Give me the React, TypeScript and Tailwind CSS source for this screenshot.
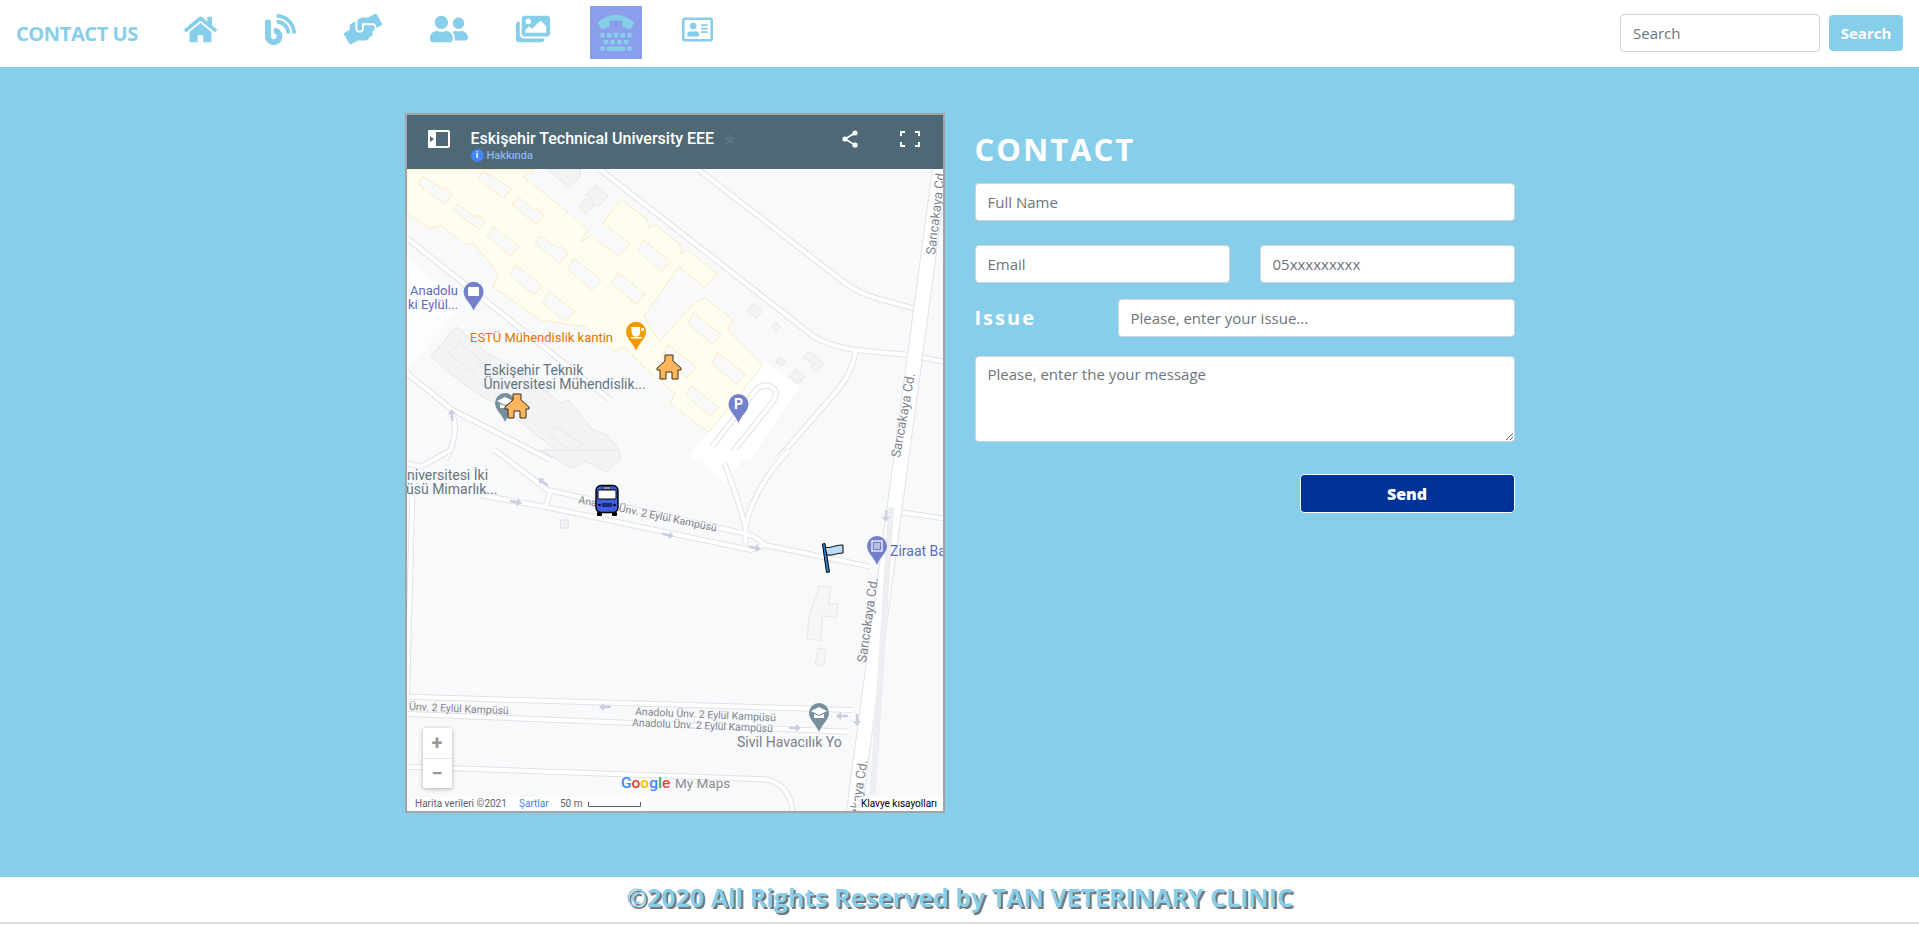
import { FaBlog, FaHandsHelping, FaHome, FaImages, FaRegAddressCard, FaTty, FaUserFriends } from "react-icons/fa";

const sans = "font-['Open_Sans','Noto_Sans',sans-serif]";
const fieldClass =
  "h-[38px] rounded border border-[#ced4da] bg-white px-[12px] text-[15px] text-[#495057] outline-none placeholder:text-[#6c757d]";

// polygons below are traced from the crops, so they sit in crop coordinates
const upper = "matrix(0.3507 0 0 0.3333 400 110)";
const lower = "matrix(0.3507 0 0 0.3333 400 450)";

const campus =
  "20,178 385,178 350,200 465,295 535,360 515,395 545,378 625,440 655,400 578,340 630,268 705,330 710,355 730,345 805,410 800,430 820,420 903,490 870,532 795,470 695,620 740,695 838,580 870,565 950,630 935,660 1035,765 880,968 770,880 785,850 690,765 640,710 610,725 530,650 400,630 265,530 280,490 210,400 190,405 115,345 85,355 20,310";

const courts = [
  "65,198 122,238 128,230 150,255 125,282 52,222",
  "235,183 318,235 295,265 222,208",
  "335,260 385,300 390,295 412,315 388,342 320,285",
  "165,283 218,325 222,315 245,335 225,358 150,300",
  "265,350 340,410 315,437 247,378",
  "400,378 450,415 458,408 480,430 455,460 385,400",
  "495,445 575,510 548,540 478,478",
  "620,488 700,552 672,582 603,520",
  "330,465 407,528 382,555 312,495",
  "425,545 500,605 472,635 405,578",
  "695,390 772,455 745,485 677,422",
  "838,610 917,675 890,703 820,640",
  "905,727 985,792 960,822 888,760",
  "830,828 910,892 885,918 813,855",
  "765,705 845,770 818,803 745,745",
];

const greys = [
  "560,225 595,260 565,290 530,255",
  "530,265 555,285 530,312 510,290",
  "420,178 515,178 510,205 480,230",
  "1010,582 1032,605 1015,624 990,602",
  "1072,636 1084,650 1072,664 1060,650",
  "1085,742 1100,755 1088,768 1072,755",
  "1130,778 1155,800 1135,822 1110,800",
  "1165,724 1208,760 1188,786 1172,772 1178,762 1150,742",
  "88,740 160,650 250,730 340,780 460,880 480,870 550,960 590,975 625,1020 600,1050 480,1050 300,900 190,830",
];

const upperRoads = [
  "M570 178 L1180 680 Q1230 710 1300 720 L1450 735 L1550 755",
  "M850 178 L1270 520 Q1310 550 1360 565 L1465 595",
  "M20 385 L600 870",
  "M20 790 L150 900 L430 1050",
  "M1300 720 Q1290 790 1240 850 L1075 1050",
  "M890 1010 L1015 840 Q1040 815 1065 835 Q1080 850 1060 880 L930 1050",
  "M150 915 Q170 970 130 1050",
];

const lowerRoads = [
  "M270 0 L420 120 L980 250 Q1020 260 1040 285 L1340 350",
  "M230 135 L410 170 L1000 300 L1040 285",
  "M430 120 L415 170",
  "M1110 0 Q1010 110 985 230 L985 280",
  "M925 40 Q960 130 985 230",
  "M35 140 L20 740",
  "M20 740 L1290 780",
  "M20 792 L1280 845",
  "M20 950 L1040 988 Q1110 1000 1120 1085",
  "M20 40 L60 50 L145 0",
  "M1420 185 L1550 205",
];

const arrows: [number, number, number][] = [
  [516, 502, 12],
  [668, 535, 12],
  [755, 548, 12],
  [543, 482, 218],
  [605, 707, 180],
  [842, 716, 180],
  [795, 728, 0],
  [857, 720, 90],
  [886, 516, 95],
  [452, 415, 265],
];

const pins: [number, number, string][] = [
  [473.6, 291.7, "#7580cc"],
  [636, 331.7, "#f29900"],
  [738.5, 404, "#7580cc"],
  [505, 403, "#78909c"],
  [877, 546, "#7580cc"],
  [819, 713, "#78909c"],
];

function Pin({ x, y, fill }: { x: number; y: number; fill: string }) {
  return (
    <g transform={`translate(${x} ${y})`}>
      <path d="M-10 0 A10 10 0 1 1 10 0 C10 7 3 11 0 19 C-3 11 -10 7 -10 0 Z" fill={fill} />
    </g>
  );
}

function House({ x, y }: { x: number; y: number }) {
  return (
    <g transform={`translate(${x} ${y})`}>
      <path
        d="M-4 0 H4 V6 L12 13 V15 H9 V24 H3 V17 H-3 V24 H-9 V15 H-12 V13 L-4 6 Z"
        fill="#ffb55f"
        stroke="#3b2c14"
        strokeWidth="1"
      />
    </g>
  );
}

function RoadLabel({ x, y, rotate, size = 10.5, children }: {
  x: number;
  y: number;
  rotate: number;
  size?: number;
  children: string;
}) {
  return (
    <text x={x} y={y} transform={`rotate(${rotate} ${x} ${y})`} fontSize={size} fill="#7d838b">
      {children}
    </text>
  );
}

function MapCanvas() {
  return (
    <svg viewBox="407 169 536 642" className="block h-[642px] w-[536px] font-['Roboto',sans-serif]">
      <rect x="407" y="169" width="536" height="642" fill="#f8f9fb" />
      <g transform={upper}>
        <polygon points="830,1030 1040,755 1140,830 1000,1050 830,1050" fill="#ffffff" />
        <polygon points="20,440 170,600 20,775" fill="#fdfdfe" />
        {greys.map((points) => (
          <polygon key={points} points={points} fill="#f1f3f4" stroke="#e4e6e9" strokeWidth="1" vectorEffect="non-scaling-stroke" />
        ))}
        <polygon points="140,730 170,698 235,755 205,787" fill="#f1f3f4" stroke="#e4e6e9" strokeWidth="1" vectorEffect="non-scaling-stroke" />
        <polygon points="425,975 445,950 518,1000 495,1028" fill="#f1f3f4" stroke="#e4e6e9" strokeWidth="1" vectorEffect="non-scaling-stroke" />
        <polygon points={campus} fill="#fffcf0" stroke="#fdeabf" strokeWidth="1" vectorEffect="non-scaling-stroke" />
        {courts.map((points) => (
          <polygon key={points} points={points} fill="#f8f9fa" stroke="#fdeabf" strokeWidth="1" vectorEffect="non-scaling-stroke" />
        ))}
        {upperRoads.map((d) => (
          <path key={d} d={d} fill="none" stroke="#dfe2e7" strokeWidth="6" vectorEffect="non-scaling-stroke" />
        ))}
        {upperRoads.map((d) => (
          <path key={d} d={d} fill="none" stroke="#ffffff" strokeWidth="4" vectorEffect="non-scaling-stroke" />
        ))}
      </g>
      <g transform={lower}>
        <polygon points="830,0 1000,0 925,100" fill="#ffffff" />
        <polygon points="400,0 625,0 630,25 590,65 530,35 490,55" fill="#f1f3f4" stroke="#e4e6e9" strokeWidth="1" vectorEffect="non-scaling-stroke" />
        <polygon points="1195,408 1230,412 1222,462 1248,460 1245,502 1205,498 1200,572 1160,565 1168,490" fill="#f5f6f7" stroke="#e4e6e9" strokeWidth="1" vectorEffect="non-scaling-stroke" />
        <polygon points="1192,595 1215,598 1208,648 1184,644" fill="#f5f6f7" stroke="#e4e6e9" strokeWidth="1" vectorEffect="non-scaling-stroke" />
        <rect x="458" y="210" width="22" height="24" fill="#f1f3f4" stroke="#e0e2e5" strokeWidth="1" vectorEffect="non-scaling-stroke" />
        {lowerRoads.map((d) => (
          <path key={d} d={d} fill="none" stroke="#dfe2e7" strokeWidth="6" vectorEffect="non-scaling-stroke" />
        ))}
        {lowerRoads.map((d) => (
          <path key={d} d={d} fill="none" stroke="#ffffff" strokeWidth="4" vectorEffect="non-scaling-stroke" />
        ))}
      </g>
      <path d="M940 169 L854 811" fill="none" stroke="#dfe2e7" strokeWidth="16" />
      <path d="M940 169 L854 811" fill="none" stroke="#ffffff" strokeWidth="14" />
      <path d="M891 510 L873 792" fill="none" stroke="#eceef1" strokeWidth="6" strokeLinecap="round" />

      {arrows.map(([x, y, rotate]) => (
        <path
          key={`${x}-${y}`}
          transform={`translate(${x} ${y}) rotate(${rotate})`}
          d="M-6 -1.2 H1 V-4 L6 0 L1 4 V1.2 H-6 Z"
          fill="#c9cee0"
        />
      ))}

      {pins.map(([x, y, fill]) => (
        <Pin key={`${x}-${y}`} x={x} y={y} fill={fill} />
      ))}
      <rect x="468" y="287" width="11" height="9" rx="1" fill="#ffffff" />
      <path d="M631 327 H640 V331 A4 4 0 0 1 632 334 Z M641 328 H644 V331 H641 Z M631 337 H642 V338.5 H631 Z" fill="#ffffff" />
      <text x="738.5" y="409" fontSize="14" fontWeight="700" fill="#ffffff" textAnchor="middle">P</text>
      <path d="M497 401 L505 397 L513 401 L505 405 Z M500 404 V408 H510 V404 L505 406 Z" fill="#ffffff" />
      <rect x="872" y="541" width="10" height="10" fill="none" stroke="#ffffff" strokeWidth="1.2" />
      <path d="M874 544 H880 M874 546 H880 M874 548 H880" stroke="#ffffff" strokeWidth="1" />
      <path d="M811 711 L819 707 L827 711 L819 715 Z M814 714 V718 H824 V714 L819 716 Z" fill="#ffffff" />

      <House x={669} y={355} />
      <House x={517} y={394} />

      <g fontSize="13">
        <text x="410" y="295" fill="#5c6bc0">Anadolu</text>
        <text x="408" y="309" fill="#5c6bc0">ki Eylül...</text>
        <text x="470" y="342" fill="#e37400">ESTÜ Mühendislik kantin</text>
      </g>
      <g fontSize="14">
        <text x="483.5" y="375" fill="#667580">Eskişehir Teknik</text>
        <text x="483.5" y="389" fill="#667580">Üniversitesi Mühendislik...</text>
        <text x="407" y="480" fill="#667580">niversitesi İki</text>
        <text x="406" y="494" fill="#667580">üsü Mimarlık...</text>
        <text x="890" y="556" fill="#5c6bc0">Ziraat Ba</text>
        <text x="737" y="747" fill="#7b8086">Sivil Havacılık Yo</text>
      </g>

      <RoadLabel x={578} y={503} rotate={11.7}>Anadolu Ünv. 2 Eylül Kampüsü</RoadLabel>
      <RoadLabel x={409} y={710} rotate={2.5}>Ünv. 2 Eylül Kampüsü</RoadLabel>
      <RoadLabel x={635} y={715} rotate={2.5}>Anadolu Ünv. 2 Eylül Kampüsü</RoadLabel>
      <RoadLabel x={632} y={726} rotate={2.5}>Anadolu Ünv. 2 Eylül Kampüsü</RoadLabel>
      <RoadLabel x={935} y={255} rotate={-83} size={13}>Sarıcakaya Cd.</RoadLabel>
      <RoadLabel x={900} y={458} rotate={-80} size={13}>Sarıcakaya Cd.</RoadLabel>
      <RoadLabel x={866} y={663} rotate={-82} size={13}>Sarıcakaya Cd.</RoadLabel>
      <RoadLabel x={854} y={845} rotate={-81} size={13}>Sarıcakaya Cd.</RoadLabel>

      {/* bus */}
      <g transform="translate(595 485)">
        <rect x="1" y="0.5" width="22" height="27" rx="5" fill="#3f5fe0" stroke="#000000" strokeWidth="1.4" />
        <rect x="3" y="5" width="18" height="9" rx="1" fill="#ffffff" stroke="#000000" strokeWidth="1" />
        <rect x="8" y="2" width="8" height="2" fill="#c9d2f5" stroke="#000000" strokeWidth="0.6" />
        <rect x="7" y="18" width="10" height="4" fill="#1c2a7a" />
        <circle cx="4.5" cy="20" r="1.3" fill="#000000" />
        <circle cx="19.5" cy="20" r="1.3" fill="#000000" />
        <rect x="2" y="27" width="5" height="4" rx="1" fill="#000000" />
        <rect x="17" y="27" width="5" height="4" rx="1" fill="#000000" />
      </g>
      {/* flag */}
      <g transform="translate(822 543)">
        <path d="M0.5 1 L3 0.5 L7.5 29 L4.5 29.5 Z" fill="#2f86d8" stroke="#000000" strokeWidth="1" />
        <path d="M3 4 C8 6 12 2 21 2 L21 10 C14 10 11 13 5 12 Z" fill="#bcdcf5" stroke="#000000" strokeWidth="1" />
      </g>

      {/* attribution */}
      <rect x="410" y="797" width="237" height="13" fill="#ffffff" opacity="0.8" />
      <rect x="856" y="797" width="87" height="14" fill="#ffffff" opacity="0.8" />
      <g fontSize="10">
        <text x="415" y="807" fill="#5f6368">Harita verileri ©2021</text>
        <text x="519" y="807" fill="#4285f4">Şartlar</text>
        <text x="560" y="807" fill="#5f6368">50 m</text>
        <text x="861" y="807" fill="#000000">Klavye kısayolları</text>
      </g>
      <path d="M588.5 802 V806.5 H640.5 V802" fill="none" stroke="#5f6368" strokeWidth="1" />

      <text x="621" y="788" fontSize="15.5" fontWeight="500">
        <tspan fill="#4285f4">G</tspan>
        <tspan fill="#ea4335">o</tspan>
        <tspan fill="#fbbc05">o</tspan>
        <tspan fill="#4285f4">g</tspan>
        <tspan fill="#34a853">l</tspan>
        <tspan fill="#ea4335">e</tspan>
      </text>
      <text x="675" y="788" fontSize="13.5" fill="#8a8d91">My Maps</text>
    </svg>
  );
}

function EmbeddedMap() {
  return (
    <div className="relative h-[700px] w-[540px] border-2 border-[#a1a5a8] font-['Roboto',sans-serif]">
      <div className="flex h-[54px] items-start bg-[#4e6875] pr-[23px] pl-[21px]">
        <svg viewBox="0 0 22 18" className="mt-[15px] h-[18px] w-[22px]">
          <path d="M8 1 H20 A1 1 0 0 1 21 2 V16 A1 1 0 0 1 20 17 H8" fill="none" stroke="#ffffff" strokeWidth="2" />
          <path d="M1 0 H8 V18 H1 A1 1 0 0 1 0 17 V1 A1 1 0 0 1 1 0 Z" fill="#ffffff" />
          <path d="M2 6 L6 9 L2 12 Z" fill="#4e6875" />
        </svg>
        <div className="ml-[21px] flex flex-col pt-[15px]">
          <div className="flex items-center">
            <span className="text-[16px] leading-[18px] font-medium text-white">Eskişehir Technical University EEE</span>
            <span className="ml-[8px] text-[17px] leading-[18px] text-[#5f7480]">★</span>
          </div>
          <div className="mt-[1px] flex items-center gap-[3px]">
            <span className="flex h-[13px] w-[13px] items-center justify-center rounded-full bg-[#4285f4] text-[9px] leading-none font-bold text-white">i</span>
            <span className="text-[11px] leading-[13px] font-medium text-[#8ab4f8]">Hakkında</span>
          </div>
        </div>
        <svg viewBox="0 0 18 18" className="mt-[15px] ml-auto h-[18px] w-[18px]">
          <path d="M14 3 L4 9 L14 15" fill="none" stroke="#ffffff" strokeWidth="1.6" />
          <circle cx="14" cy="3" r="2.6" fill="#ffffff" />
          <circle cx="4" cy="9" r="2.6" fill="#ffffff" />
          <circle cx="14" cy="15" r="2.6" fill="#ffffff" />
        </svg>
        <svg viewBox="0 0 20 16" className="mt-[16px] ml-[41px] h-[16px] w-[20px]">
          <path d="M1 5 V1 H5 M15 1 H19 V5 M19 11 V15 H15 M5 15 H1 V11" fill="none" stroke="#ffffff" strokeWidth="2" />
        </svg>
      </div>
      <MapCanvas />
      <div className="absolute top-[613px] left-[16px] flex h-[60px] w-[29px] flex-col rounded-[2px] bg-white shadow-[0_1px_4px_rgba(0,0,0,0.3)]">
        <div className="flex flex-1 items-center justify-center border-b border-[#e6e6e6] text-[20px] leading-none font-bold text-[#969696]">+</div>
        <div className="flex flex-1 items-center justify-center text-[20px] leading-none font-bold text-[#969696]">−</div>
      </div>
    </div>
  );
}

function ContactForm() {
  return (
    <form className="flex w-[540px] flex-col pt-[16px]">
      <h1 className="mb-[14px] flex h-[40px] items-center text-[31px] font-bold tracking-[2px] text-white">CONTACT</h1>
      <input className={fieldClass} placeholder="Full Name" />
      <div className="mt-[24px] flex gap-[30px]">
        <input className={`${fieldClass} w-0 flex-1`} placeholder="Email" />
        <input className={`${fieldClass} w-0 flex-1`} placeholder="05xxxxxxxxx" />
      </div>
      <div className="mt-[16px] flex items-center">
        <label className="w-[143px] text-[20px] font-bold tracking-[2px] text-white">Issue</label>
        <input className={`${fieldClass} w-0 flex-1`} placeholder="Please, enter your issue..." />
      </div>
      <textarea className={`${fieldClass} mt-[19px] h-[86px] py-[6px]`} placeholder="Please, enter the your message" />
      <div className="mt-[32px] flex justify-end">
        <button type="button" className="h-[39px] w-[215px] rounded border border-white bg-[#003399] text-[16px] font-extrabold text-white">
          Send
        </button>
      </div>
    </form>
  );
}

export default function App() {
  const icon = "text-[#87ceeb]";
  return (
    <div className={`${sans} h-[925px] overflow-hidden bg-white`}>
      <header className="flex h-[67px] items-start">
        <span className="mt-[21px] ml-[16px] text-[20px] leading-[26px] font-bold tracking-[-0.4px] text-[#87ceeb]">CONTACT US</span>
        <nav className="mt-[6px] ml-[38px] flex h-[53px] items-start gap-[32px]">
          <a className="flex h-[46px] items-center px-2"><FaHome className={`${icon} text-[33px]`} /></a>
          <a className="flex h-[46px] items-center px-2"><FaBlog className={`${icon} text-[31px]`} /></a>
          <a className="flex h-[46px] items-center px-2"><FaHandsHelping className={`${icon} text-[38px]`} /></a>
          <a className="flex h-[46px] items-center px-2"><FaUserFriends className={`${icon} text-[38px]`} /></a>
          <a className="flex h-[46px] items-center px-2"><FaImages className={`${icon} text-[34px]`} /></a>
          <a className="flex h-[53px] items-center bg-[#8a9eeb] px-2"><FaTty className={`${icon} text-[36px]`} /></a>
          <a className="flex h-[46px] items-center px-2"><FaRegAddressCard className={`${icon} text-[31px]`} /></a>
        </nav>
        <div className="mt-[14px] ml-auto flex items-center gap-[9px] pr-[16px]">
          <input className="h-[38px] w-[200px] rounded border border-[#ced4da] bg-white px-[12px] text-[15px] outline-none placeholder:text-[#6c757d]" placeholder="Search" />
          <button type="button" className="h-[36px] w-[74px] rounded bg-[#87ceeb] text-[15px] font-bold text-white">Search</button>
        </div>
      </header>
      <main className="flex h-[810px] justify-center gap-[30px] bg-[#87ceeb] pt-[46px]">
        <EmbeddedMap />
        <ContactForm />
      </main>
      <footer className="flex h-[47px] items-center justify-center border-b-2 border-[#dddddd] bg-white pb-[3px] text-[25px] font-bold text-[#87ceeb] [text-shadow:2px_2px_#777777]">
        ©2020 All Rights Reserved by TAN VETERINARY CLINIC
      </footer>
    </div>
  );
}
